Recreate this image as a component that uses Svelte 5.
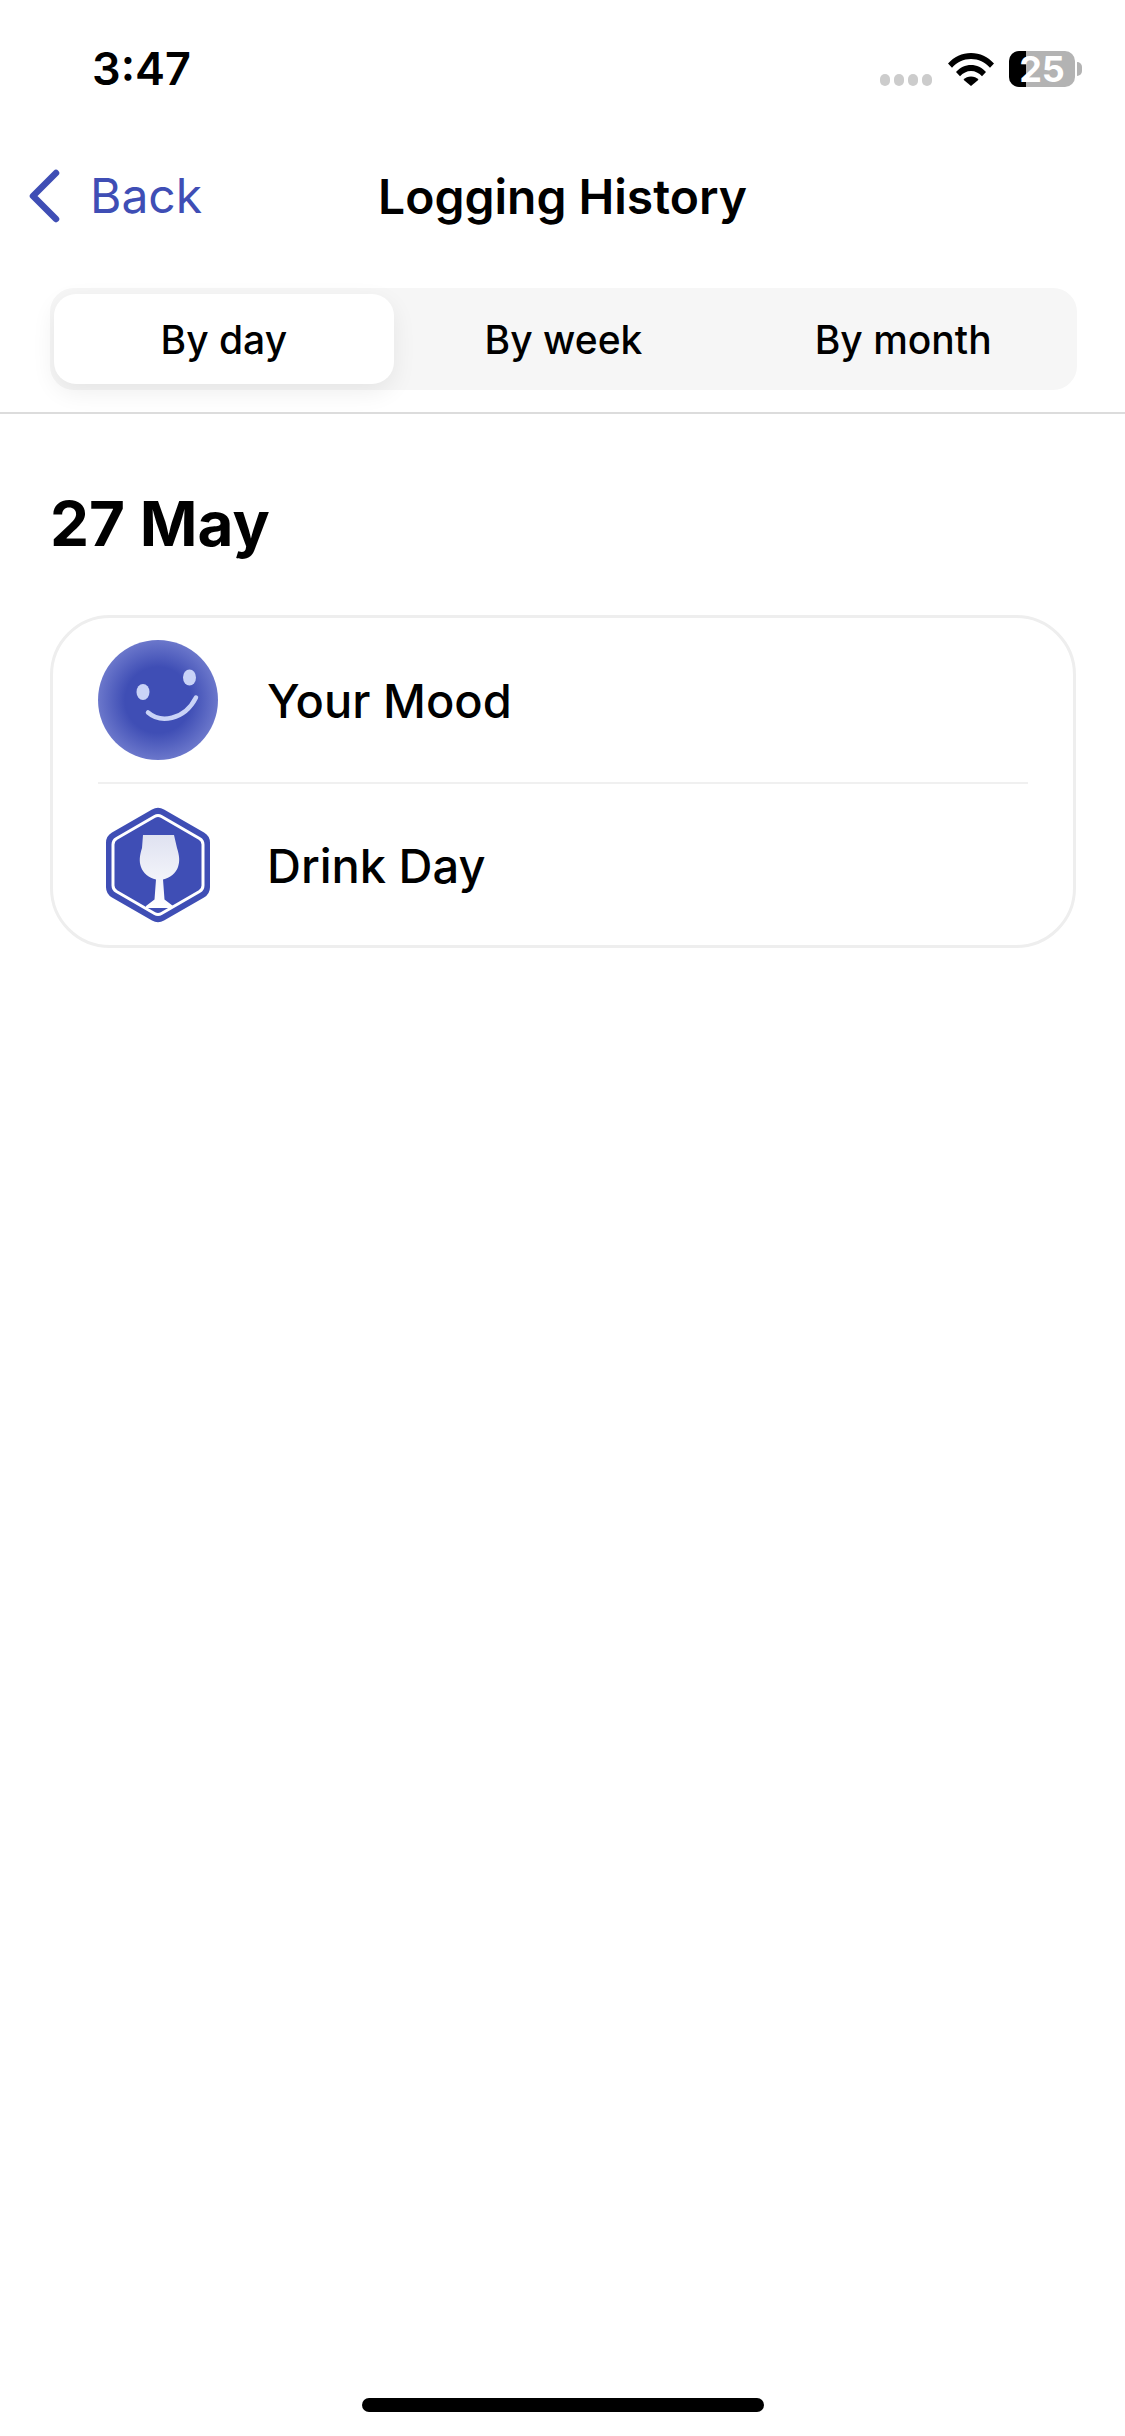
<script>
  const tabs = ['By day', 'By week', 'By month'];
</script>

<div class="page">
  <header class="status">
    <span class="time">3:47</span>
    <div class="status-icons">
      <div class="dots"><i></i><i></i><i></i><i></i></div>
      <svg class="wifi" viewBox="0 0 46 34" width="46" height="34">
        <path d="M0 11.5C6 5 14 1 23 1s17 4 23 10.5l-4 4.3C37 10.3 30.500 7 23 7S9 10.300 4 15.800z" fill="#000"/>
        <path d="M8 20C12 15.500 17.300 13 23 13s11 2.500 15 7l-4 4.300C31 21 27.200 19 23 19s-8 2-11 5.300z" fill="#000"/>
        <path d="M15.500 27.800C17.500 25.600 20 24.500 23 24.500s5.500 1.100 7.500 3.300L23 34z" fill="#000"/>
      </svg>
      <div class="battery">
        <div class="batt-body"><span class="batt-fill"></span><span class="batt-num">25</span></div>
        <span class="nub"></span>
      </div>
    </div>
  </header>

  <nav class="nav">
    <div class="back">
      <svg viewBox="0 0 36 56" width="36" height="56">
        <path d="M30 5 7 28l23 23" fill="none" stroke="#3f4eb5" stroke-width="6.500" stroke-linecap="round" stroke-linejoin="round"/>
      </svg>
      <span>Back</span>
    </div>
    <h1>Logging History</h1>
  </nav>

  <div class="tabs-wrap">
    <div class="tabs">
      {#each tabs as t, i}
        <div class="tab" class:active={i === 0}>{t}</div>
      {/each}
    </div>
  </div>

  <main class="content">
    <h2>27 May</h2>
    <section class="card">
      <div class="row">
        <div class="icon">
          <svg viewBox="0 0 120 120" width="120" height="120">
            <defs>
              <radialGradient id="moodGrad" cx="50%" cy="50%" r="50%">
                <stop offset="0" stop-color="#3f4eb5"/>
                <stop offset="0.55" stop-color="#3f4eb5"/>
                <stop offset="1" stop-color="#6b77cb"/>
              </radialGradient>
            </defs>
            <circle cx="60" cy="60" r="60" fill="url(#moodGrad)"/>
            <ellipse cx="45" cy="52" rx="6.500" ry="8" fill="#c9d3f7"/>
            <ellipse cx="91.500" cy="37.500" rx="6.500" ry="8" fill="#c9d3f7"/>
            <path d="M50 72.500C62 83 86 81 98 57.500" fill="none" stroke="#c9d3f7" stroke-width="4.500" stroke-linecap="round"/>
          </svg>
        </div>
        <span class="label">Your Mood</span>
      </div>
      <div class="row second">
        <div class="icon">
          <svg viewBox="0 0 104 116" width="104" height="116">
            <defs>
              <linearGradient id="glassGrad" x1="0" y1="0" x2="0" y2="1">
                <stop offset="0" stop-color="#dfe2f1"/>
                <stop offset="1" stop-color="#ffffff"/>
              </linearGradient>
            </defs>
            <path d="M46 2.500a12 12 0 0 1 12 0l40 23a12 12 0 0 1 6 10.500v44a12 12 0 0 1-6 10.500l-40 23a12 12 0 0 1-12 0l-40-23A12 12 0 0 1 0 80V36a12 12 0 0 1 6-10.500z" fill="#3f4eb5"/>
            <path d="M48.500 9.500a7 7 0 0 1 7 0l38 22a7 7 0 0 1 3.500 6v41a7 7 0 0 1-3.500 6l-38 22a7 7 0 0 1-7 0l-38-22a7 7 0 0 1-3.500-6v-41a7 7 0 0 1 3.500-6z" fill="none" stroke="#fff" stroke-width="3"/>
            <path d="M37 28h31l3 13c2.500 8 3 13 1 19-2 6-8 11-15 12.500l1.500 20 8.500 6.500v2H40v-2l8.500-6.500 1.500-20c-7-1.500-13-6.500-15-12.500-2-6-1.500-11 1-19z" fill="url(#glassGrad)"/>
          </svg>
        </div>
        <span class="label">Drink Day</span>
      </div>
    </section>
  </main>

  <div class="home-indicator"></div>
</div>

<style>
  :global(body) { margin: 0; background: #fff; }
  .page {
    width: 1125px;
    height: 2436px;
    display: flex;
    flex-direction: column;
    background: #fff;
    color: #000;
    font-family: Inter, "Liberation Sans", sans-serif;
    overflow: hidden;
  }
  .status {
    height: 132px;
    flex: none;
    box-sizing: border-box;
    padding: 43px 43px 0 92px;
    display: flex;
    justify-content: space-between;
    align-items: flex-start;
  }
  .time { font-size: 45px; font-weight: 600; line-height: 52px; }
  .status-icons { display: flex; align-items: flex-start; padding-top: 8px; }
  .dots { display: flex; gap: 4px; margin-top: 23px; margin-right: 16px; }
  .dots i { width: 10px; height: 12px; border-radius: 5px; background: #ccc; }
  .wifi { margin-right: 15px; margin-top: 1px; }
  .battery { display: flex; align-items: center; }
  .batt-body {
    position: relative;
    width: 66px;
    height: 36px;
    border-radius: 10px;
    background: #b3b3b3;
    overflow: hidden;
    display: flex;
    align-items: center;
    justify-content: center;
  }
  .batt-fill { position: absolute; left: 0; top: 0; bottom: 0; width: 17px; background: #000; }
  .batt-num { position: relative; color: #fff; font-size: 36px; font-weight: 700; line-height: 36px; }
  .nub { width: 5px; height: 14px; margin-left: 2px; background: #b3b3b3; border-radius: 0 5px 5px 0; }
  .nav {
    position: relative;
    height: 132px;
    flex: none;
    display: flex;
    align-items: center;
    justify-content: center;
  }
  .back {
    position: absolute;
    left: 26px;
    top: 36px;
    display: flex;
    align-items: center;
    gap: 28px;
    color: #3f4eb5;
    font-size: 48px;
    line-height: 56px;
  }
  h1 { margin: 0; font-size: 48px; font-weight: 600; line-height: 56px; position: relative; top: -1px; }
  .tabs-wrap {
    flex: none;
    height: 150px;
    box-sizing: border-box;
    padding: 24px 48px 0 50px;
    border-bottom: 2px solid #dcdcdc;
  }
  .tabs {
    height: 102px;
    box-sizing: border-box;
    padding: 6px 4px;
    display: grid;
    grid-template-columns: repeat(3, 1fr);
    background: #f6f6f6;
    border-radius: 24px;
  }
  .tab {
    display: flex;
    align-items: center;
    justify-content: center;
    font-size: 39px;
    font-weight: 500;
    border-radius: 22px;
  }
  .tab.active { background: #fff; box-shadow: 0 8px 24px rgba(0,0,0,0.07); }
  .content { flex: 1; padding: 0 49px 0 50px; }
  h2 { margin: 0; padding-top: 72px; font-size: 62px; font-weight: 700; line-height: 76px; height: 76px; }
  .card {
    margin-top: 53px;
    box-sizing: border-box;
    height: 333px;
    border: 3px solid #eeeeee;
    border-radius: 60px;
    padding: 0 45px;
  }
  .row {
    height: 164px;
    display: flex;
    align-items: center;
    border-bottom: 2px solid #f0f0f0;
  }
  .row.second { height: 162px; border-bottom: 0; }
  .icon { width: 120px; display: flex; justify-content: center; flex: none; }
  .label { margin-left: 49px; font-size: 47px; font-weight: 500; }
  .home-indicator {
    position: absolute;
    left: 362px;
    top: 2398px;
    width: 402px;
    height: 14px;
    border-radius: 7px;
    background: #000;
  }
</style>
